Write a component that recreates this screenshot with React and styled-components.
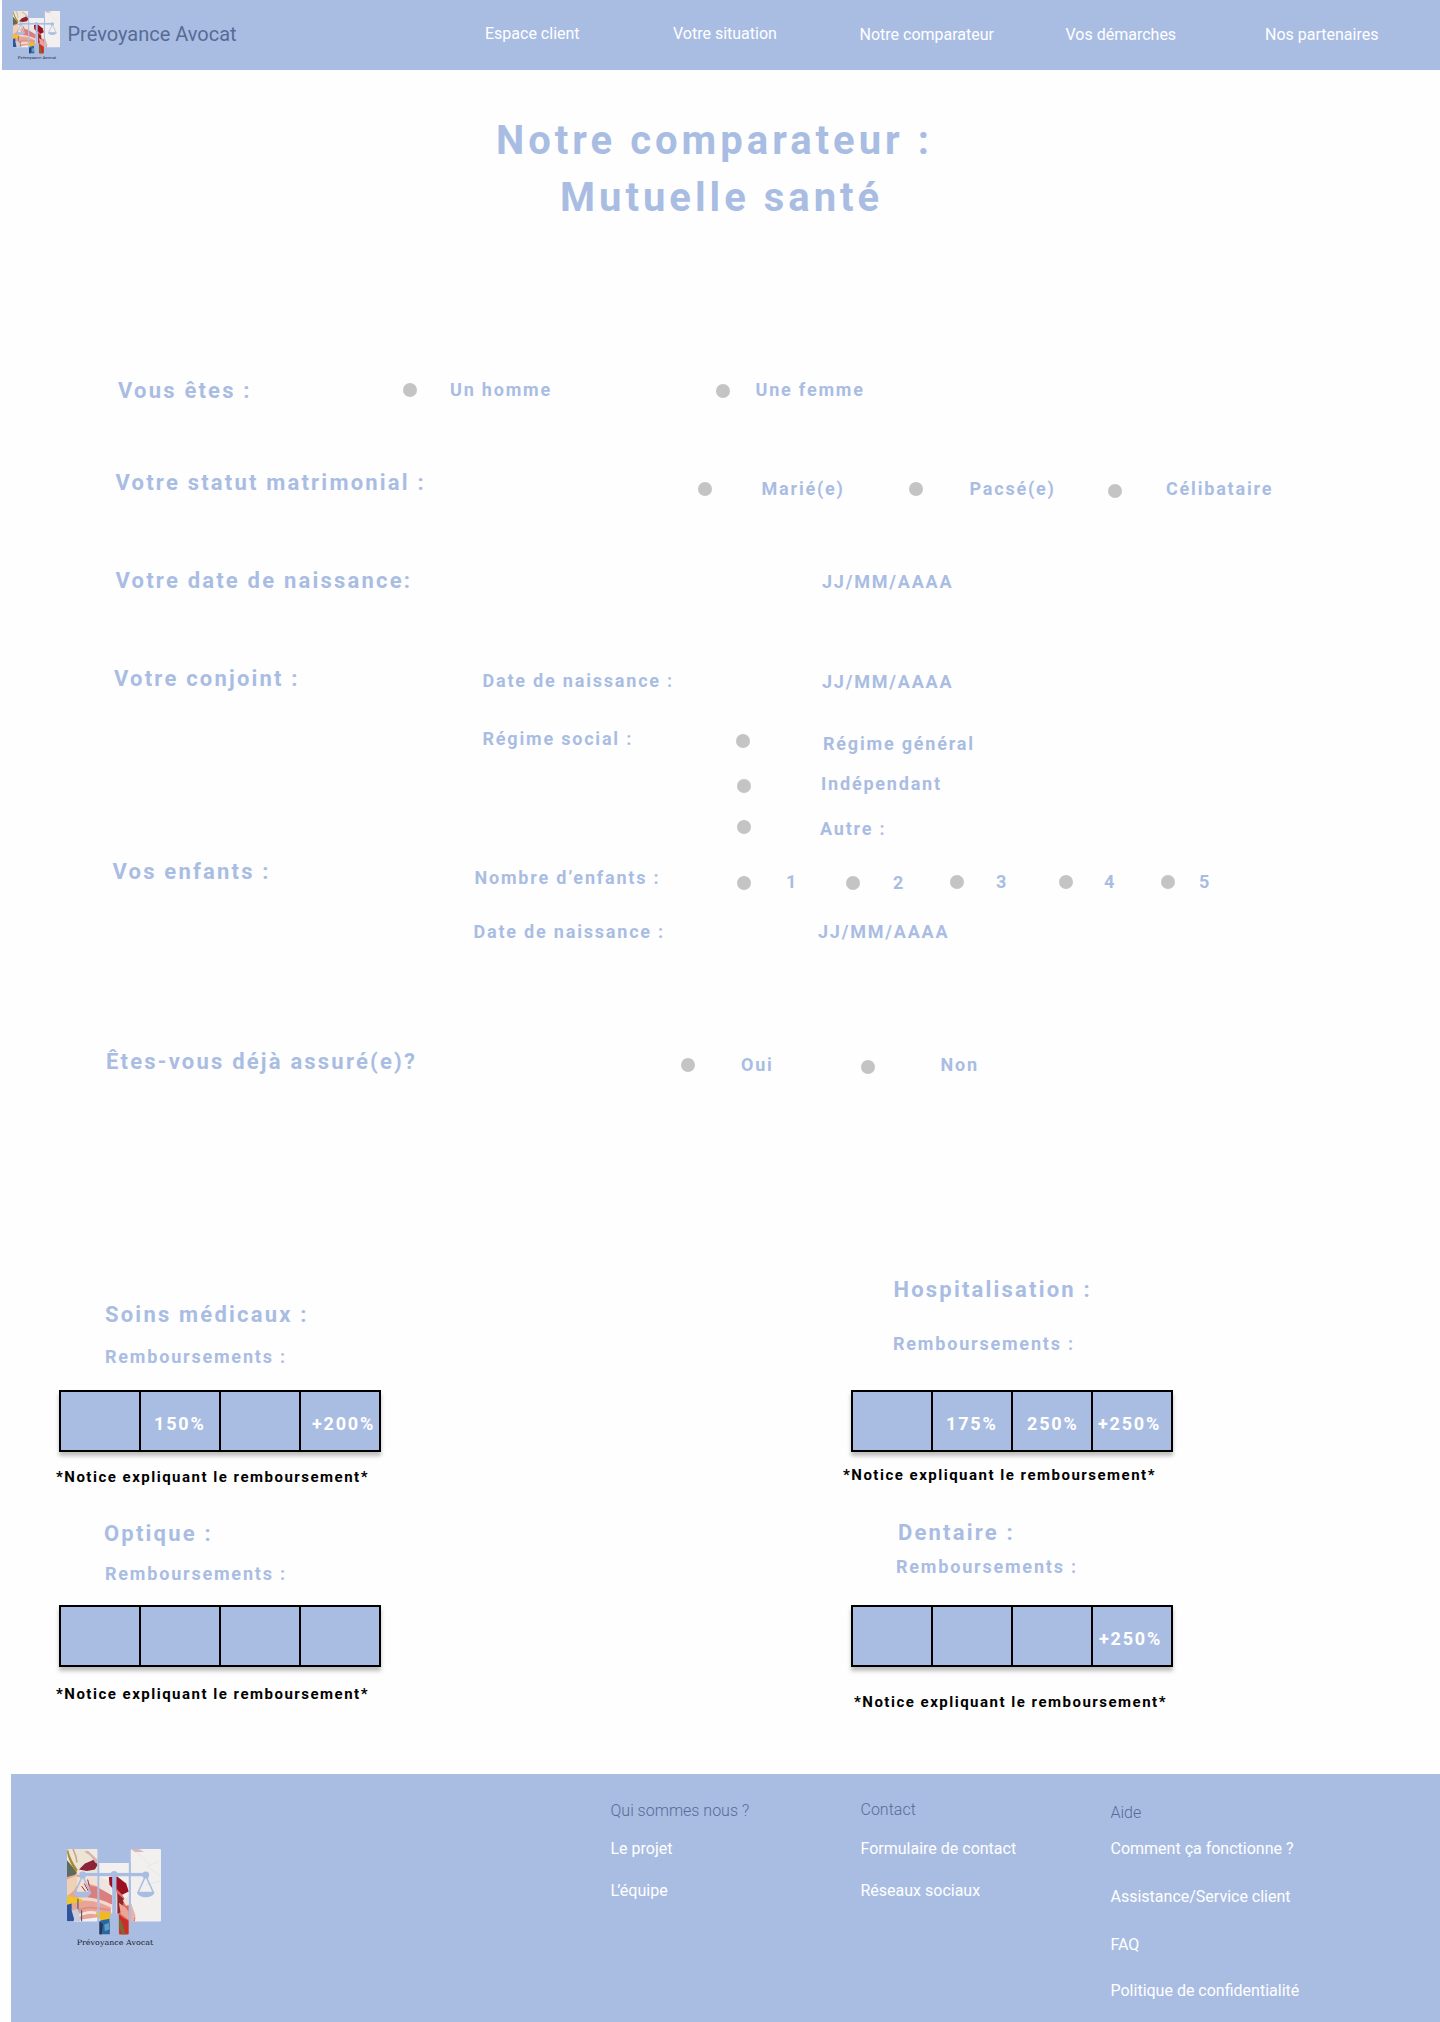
import React from "react";
import styled, { createGlobalStyle } from "styled-components";

const BLUE = "#a9bde3";
const SLATE = "#586b96";

const GlobalStyle = createGlobalStyle`
  *, *::before, *::after { box-sizing: border-box; }
  body {
    margin: 0;
    background: #fff;
    font-family: Roboto, "Liberation Sans", sans-serif;
  }
`;

const Page = styled.div`
  width: 1440px;
  height: 2022px;
  overflow: hidden;
  display: flex;
  flex-direction: column;
  background: #fefefe;
`;

/* Turns the left edges of the cells into grid track widths. */
const tracks = (xs) =>
  xs.map((x, i) => `${+(x - (i ? xs[i - 1] : 0)).toFixed(2)}px`).join(" ") + " 1fr";

const Row = styled.div`
  display: grid;
  flex: none;
  grid-template-columns: ${(p) => tracks(p.$at)};
  height: ${(p) => p.$h}px;
  align-items: start;

  & > :first-child {
    grid-column-start: 2;
  }
`;

const Header = styled.header`
  flex: none;
  height: 70px;
  margin-left: 2px;
  background: ${BLUE};
`;

const LogoSlot = styled.div`
  padding-top: 11px;
  line-height: 0;
`;

const Brand = styled.span`
  margin-top: 22px;
  font-size: 20px;
  line-height: 24px;
  color: ${SLATE};
  white-space: nowrap;
`;

const NavLink = styled.a`
  margin-top: ${(p) => p.$dy}px;
  font-size: 16px;
  line-height: 21px;
  font-weight: 400;
  color: #fff;
  white-space: nowrap;
`;

const Title = styled.h1`
  flex: none;
  margin: 0;
  height: 306px;
  padding: 42px 0 0 496px;
  font-size: 40px;
  line-height: 57px;
  font-weight: 700;
  letter-spacing: 4px;
  color: ${BLUE};
  white-space: nowrap;
`;

const TitleLine = styled.span`
  display: block;
  margin-left: ${(p) => p.$shift || 0}px;
`;

const Label = styled.h2`
  margin: ${(p) => p.$dy || 0}px 0 0 ${(p) => p.$dx || 0}px;
  font-size: 22px;
  line-height: 29px;
  font-weight: 700;
  letter-spacing: 2.2px;
  color: ${BLUE};
  white-space: nowrap;
`;

const Text = styled.span`
  display: block;
  margin: ${(p) => p.$dy || 0}px 0 0 ${(p) => p.$dx || 0}px;
  font-size: 18px;
  line-height: 24px;
  font-weight: 700;
  letter-spacing: 1.8px;
  color: ${BLUE};
  white-space: nowrap;
`;

const Dot = styled.span`
  width: 14px;
  height: 14px;
  margin-top: ${(p) => p.$dy}px;
  border-radius: 50%;
  background: #c4c4c4;
`;

const Panels = styled.section`
  flex: none;
  display: grid;
  grid-template-columns: 792px 648px;
  height: 506px;
`;

const Panel = styled.div`
  display: flex;
  flex-direction: column;
  align-items: flex-start;
  padding-left: 59px;
`;

const Card = styled.article`
  flex: none;
  height: ${(p) => p.$h}px;
  padding-top: ${(p) => p.$pt || 0}px;
  display: grid;
  grid-template-rows: ${(p) => p.$rows};
  align-items: start;
  align-content: start;
`;

const Scale = styled.div`
  display: flex;
  width: 322px;
  height: 62px;
  border: 2px solid #000;
  background: ${BLUE};
  box-shadow: 0 4px 4px rgba(0, 0, 0, 0.25);
`;

const Step = styled.div`
  flex: none;
  width: 80px;
  padding: 20px 0 0 ${(p) => p.$pad || 0}px;
  font-size: 18px;
  line-height: 24px;
  font-weight: 700;
  letter-spacing: 1.8px;
  color: #fff;
  white-space: nowrap;

  &:not(:last-child) {
    border-right: 2px solid #000;
  }
`;

const Notice = styled.p`
  margin: 0 0 0 ${(p) => p.$dx}px;
  font-size: 15px;
  line-height: 20px;
  font-weight: 700;
  letter-spacing: 1.5px;
  color: #000;
  white-space: nowrap;
`;

const Footer = styled.footer`
  flex: none;
  height: 248px;
  margin-left: 11px;
  display: grid;
  grid-template-columns: 56px 543.5px 250px 250px 1fr;
  background: ${BLUE};
`;

const FooterLogo = styled.div`
  grid-column: 2;
  padding-top: 75px;
  line-height: 0;
`;

const FooterColumn = styled.nav`
  display: flex;
  flex-direction: column;
  padding-top: ${(p) => p.$top}px;
`;

const FooterHeading = styled.h3`
  margin: 0;
  font-size: 16px;
  line-height: 21px;
  font-weight: 300;
  color: ${SLATE};
`;

const FooterLink = styled.a`
  margin-top: ${(p) => p.$gap}px;
  font-size: 16px;
  line-height: 21px;
  font-weight: 400;
  color: #fff;
  white-space: nowrap;
`;

const Kern = styled.span`
  letter-spacing: -2px;
`;

function Logo({ width, id }) {
  return (
    <svg width={width} height={(width * 306) / 283} viewBox="0 0 283 306" overflow="visible">
      <defs>
        <clipPath id={id}>
          <rect x="0" y="0" width="92" height="218" rx="3" />
          <rect x="97" y="42" width="89" height="216" rx="2" />
          <rect x="192" y="0" width="91" height="218" rx="3" />
        </clipPath>
      </defs>
      <g clipPath={`url(#${id})`}>
        <rect width="283" height="260" fill="#f1f0ef" />
        <path d="M0 0H92V70L50 84L0 96Z" fill="#ece5d6" />
        <path d="M0 34L22 60L30 72L18 84L0 104Z" fill="#5d6a5c" />
        <path d="M3 0C8 24 18 42 32 62L28 70C14 52 3 28 0 8Z" fill="#a58c2e" />
        <path d="M18 0C24 12 28 22 30 40" stroke="#c9a98b" strokeWidth="5" fill="none" />
        <path d="M36 62L54 44L72 36L84 30L92 48L84 62L60 66Z" fill="#8d2339" />
        <path d="M52 8L70 20L86 42L92 44V28L72 2Z" fill="#d9b3b0" />
        <path d="M58 0L92 32V0Z" fill="#f0ebe2" />
        <path d="M0 84L30 76L62 90L96 116L134 146L132 200L0 218Z" fill="#e6a596" />
        <path d="M0 92L28 80L38 98L20 126L0 142Z" fill="#efd2b4" />
        <path d="M30 84L92 84V112L62 104L70 130H30Z" fill="#f0e0d6" />
        <path d="M44 112L56 128M52 104L64 126M62 92L68 114" stroke="#a62b38" strokeWidth="3" />
        <path d="M66 110L96 116L136 140V166L96 160L64 148Z" fill="#d97f80" />
        <path d="M0 158C40 144 90 148 134 172" stroke="#f4d8ce" strokeWidth="10" fill="none" />
        <path d="M24 190C56 168 96 178 128 184" stroke="#e08c84" strokeWidth="5" fill="none" />
        <path d="M30 204C60 186 84 190 100 196" stroke="#f6e4da" strokeWidth="8" fill="none" />
        <path d="M0 140L28 146L46 152L44 160L16 164L0 170Z" fill="#f0c22b" />
        <path d="M0 168L14 164L14 186L24 188L20 218H0Z" fill="#2c559d" />
        <path d="M33 150V190M44 184V218" stroke="#40486e" strokeWidth="3" />
        <path d="M14 186L34 180L40 218H24Z" fill="#c9cfdc" />
        <path d="M97 42H186V76L136 84L97 76Z" fill="#f3f1ef" />
        <path d="M97 84L128 96L132 136L97 118Z" fill="#f0e4df" />
        <path d="M126 84L150 82L178 104L186 128L166 138L140 122L128 108Z" fill="#9c1022" />
        <path d="M148 118L166 138L186 170L206 206L204 218H186V258H152V150Z" fill="#dc6a60" />
        <path d="M152 134L172 152L162 190L152 196Z" fill="#8e2528" />
        <path d="M156 162L176 176L204 214H186L162 196Z" fill="#eaa596" />
        <path d="M154 194L170 208L186 216V258H158Z" fill="#c92f27" />
        <path d="M152 206L164 216L176 258H166L156 232Z" fill="#7c6b34" />
        <path d="M168 154L186 140V168L178 172Z" fill="#f2dfdc" />
        <path d="M88 190L134 192L134 212L104 216L88 204Z" fill="#efb91f" />
        <path d="M97 216L128 210L132 258H97Z" fill="#2867a4" />
        <path d="M97 218L108 226L104 258H97Z" fill="#233759" />
        <path d="M112 228L126 222L128 242L114 248Z" fill="#5f9ebd" />
        <path d="M240 52L262 66L283 84M214 12L250 50L276 36M238 108L283 96" stroke="#dfe2e6" strokeWidth="2" fill="none" />
        <path d="M192 0H216L232 8L206 10Z" fill="#d9b6bc" />
        <path d="M192 160L206 200L200 218H192Z" fill="#e7b2aa" />
      </g>
      <g fill={BLUE} stroke="none">
        <rect x="92" y="0" width="5" height="218" />
        <rect x="186.500" y="42" width="5" height="180" />
        <path d="M136 75H149V195H156V260H129V195H136Z" />
        <rect x="44" y="72" width="196" height="10" />
        <circle cx="47" cy="78" r="10.500" />
        <circle cx="237" cy="78" r="10.500" />
        <circle cx="142" cy="76" r="10" />
        <path d="M21 130H73C71 150 23 150 21 130Z" />
        <path d="M211 130H263C261 150 213 150 211 130Z" />
      </g>
      <g fill="none" stroke={BLUE} strokeWidth="4.500">
        <path d="M47 80L24 131H70Z" />
        <path d="M237 80L214 131H260Z" />
      </g>
      <text
        x="29"
        y="290"
        textLength="231"
        lengthAdjust="spacingAndGlyphs"
        fontFamily='"DejaVu Serif", "Liberation Serif", serif'
        fontSize="22"
        fill="#15171d"
      >
        Prévoyance Avocat
      </text>
    </svg>
  );
}

function ScaleBar({ steps }) {
  return (
    <Scale>
      {steps.map(([value, pad], i) => (
        <Step key={i} $pad={pad}>
          {value}
        </Step>
      ))}
    </Scale>
  );
}

function CoverCard({ h, pt, rows, title, titleX, subX, steps, noticeX }) {
  return (
    <Card $h={h} $pt={pt} $rows={rows}>
      <Label $dx={titleX}>{title}</Label>
      <Text $dx={subX}>Remboursements :</Text>
      <ScaleBar steps={steps} />
      <Notice $dx={noticeX}>*Notice expliquant le remboursement*</Notice>
    </Card>
  );
}

const EMPTY = ["", 0];

export default function App() {
  return (
    <Page>
      <GlobalStyle />
      <Header>
        <Row $h={70} $at={[11, 65.5, 483, 671, 857.5, 1063.5, 1263]}>
          <LogoSlot>
            <Logo width={47} id="logo-header" />
          </LogoSlot>
          <Brand>Prévoyance Avocat</Brand>
          <NavLink $dy={23}>Espace client</NavLink>
          <NavLink $dy={23}>Votre situation</NavLink>
          <NavLink $dy={24}>Notre comparateur</NavLink>
          <NavLink $dy={24}>Vos démarches</NavLink>
          <NavLink $dy={24}>Nos partenaires</NavLink>
        </Row>
      </Header>

      <Title>
        <TitleLine>Notre comparateur :</TitleLine>
        <TitleLine $shift={64}>Mutuelle santé</TitleLine>
      </Title>

      <Row $h={92} $at={[118, 403, 450, 716, 755.5]}>
        <Label>Vous êtes :</Label>
        <Dot $dy={7} />
        <Text $dy={2}>Un homme</Text>
        <Dot $dy={8} />
        <Text $dy={2}>Une femme</Text>
      </Row>

      <Row $h={98} $at={[115.5, 698, 761.5, 909, 969.5, 1108, 1166]}>
        <Label>Votre statut matrimonial :</Label>
        <Dot $dy={14} />
        <Text $dy={9}>Marié(e)</Text>
        <Dot $dy={14} />
        <Text $dy={9}>Pacsé(e)</Text>
        <Dot $dy={16} />
        <Text $dy={9}>Célibataire</Text>
      </Row>

      <Row $h={98} $at={[115.5, 822]}>
        <Label>Votre date de naissance:</Label>
        <Text $dy={4}>JJ/MM/AAAA</Text>
      </Row>

      <Row $h={58} $at={[114, 482.5, 822]}>
        <Label>Votre conjoint :</Label>
        <Text $dy={5}>Date de naissance :</Text>
        <Text $dy={6}>JJ/MM/AAAA</Text>
      </Row>
      <Row $h={48} $at={[482.5, 736, 823]}>
        <Text $dy={5}>Régime social :</Text>
        <Dot $dy={12} />
        <Text $dy={10}>Régime général</Text>
      </Row>
      <Row $h={43} $at={[737, 821]}>
        <Dot $dy={9} />
        <Text $dy={2}>Indépendant</Text>
      </Row>
      <Row $h={44} $at={[737, 820]}>
        <Dot $dy={7} />
        <Text $dy={4}>Autre :</Text>
      </Row>

      <Row $h={55} $at={[112.5, 474.5, 737, 786, 846, 893, 950, 996, 1059, 1104, 1161, 1199]}>
        <Label>Vos enfants :</Label>
        <Text $dy={9}>Nombre d’enfants :</Text>
        <Dot $dy={19} />
        <Text $dy={13}>1</Text>
        <Dot $dy={19} />
        <Text $dy={14}>2</Text>
        <Dot $dy={18} />
        <Text $dy={13}>3</Text>
        <Dot $dy={18} />
        <Text $dy={13}>4</Text>
        <Dot $dy={18} />
        <Text $dy={13}>5</Text>
      </Row>
      <Row $h={135} $at={[473.5, 818]}>
        <Text $dy={8}>Date de naissance :</Text>
        <Text $dy={8}>JJ/MM/AAAA</Text>
      </Row>

      <Row $h={221} $at={[106, 681, 741, 861, 940.5]}>
        <Label>Êtes-vous déjà assuré(e)?</Label>
        <Dot $dy={11} />
        <Text $dy={6}>Oui</Text>
        <Dot $dy={13} />
        <Text $dy={6}>Non</Text>
      </Row>

      <Panels>
        <Panel>
          <CoverCard
            h={251}
            pt={32}
            rows="45px 45px 77px 20px"
            title="Soins médicaux :"
            titleX={46}
            subX={46}
            steps={[EMPTY, ["150%", 13], EMPTY, ["+200%", 11]]}
            noticeX={-3}
          />
          <CoverCard
            h={187}
            rows="43px 43px 79px 20px"
            title="Optique :"
            titleX={45}
            subX={46}
            steps={[EMPTY, EMPTY, EMPTY, EMPTY]}
            noticeX={-3}
          />
        </Panel>
        <Panel>
          <CoverCard
            h={250}
            pt={7}
            rows="57px 58px 75px 20px"
            title="Hospitalisation :"
            titleX={42.5}
            subX={42}
            steps={[EMPTY, ["175%", 13], ["250%", 14], ["+250%", 5]]}
            noticeX={-8}
          />
          <CoverCard
            h={187}
            rows="37px 50px 87px 20px"
            title="Dentaire :"
            titleX={47}
            subX={45}
            steps={[EMPTY, EMPTY, EMPTY, ["+250%", 6]]}
            noticeX={3}
          />
        </Panel>
      </Panels>

      <Footer>
        <FooterLogo>
          <Logo width={94} id="logo-footer" />
        </FooterLogo>
        <FooterColumn $top={26}>
          <FooterHeading>Qui sommes nous ?</FooterHeading>
          <FooterLink $gap={17}>Le projet</FooterLink>
          <FooterLink $gap={21}>
            <Kern>L</Kern>’équipe
          </FooterLink>
        </FooterColumn>
        <FooterColumn $top={25}>
          <FooterHeading>Contact</FooterHeading>
          <FooterLink $gap={18}>Formulaire de contact</FooterLink>
          <FooterLink $gap={21}>Réseaux sociaux</FooterLink>
        </FooterColumn>
        <FooterColumn $top={28}>
          <FooterHeading>Aide</FooterHeading>
          <FooterLink $gap={15}>Comment ça fonctionne ?</FooterLink>
          <FooterLink $gap={27}>Assistance/Service client</FooterLink>
          <FooterLink $gap={27}>FAQ</FooterLink>
          <FooterLink $gap={25}>Politique de confidentialité</FooterLink>
        </FooterColumn>
      </Footer>
    </Page>
  );
}
